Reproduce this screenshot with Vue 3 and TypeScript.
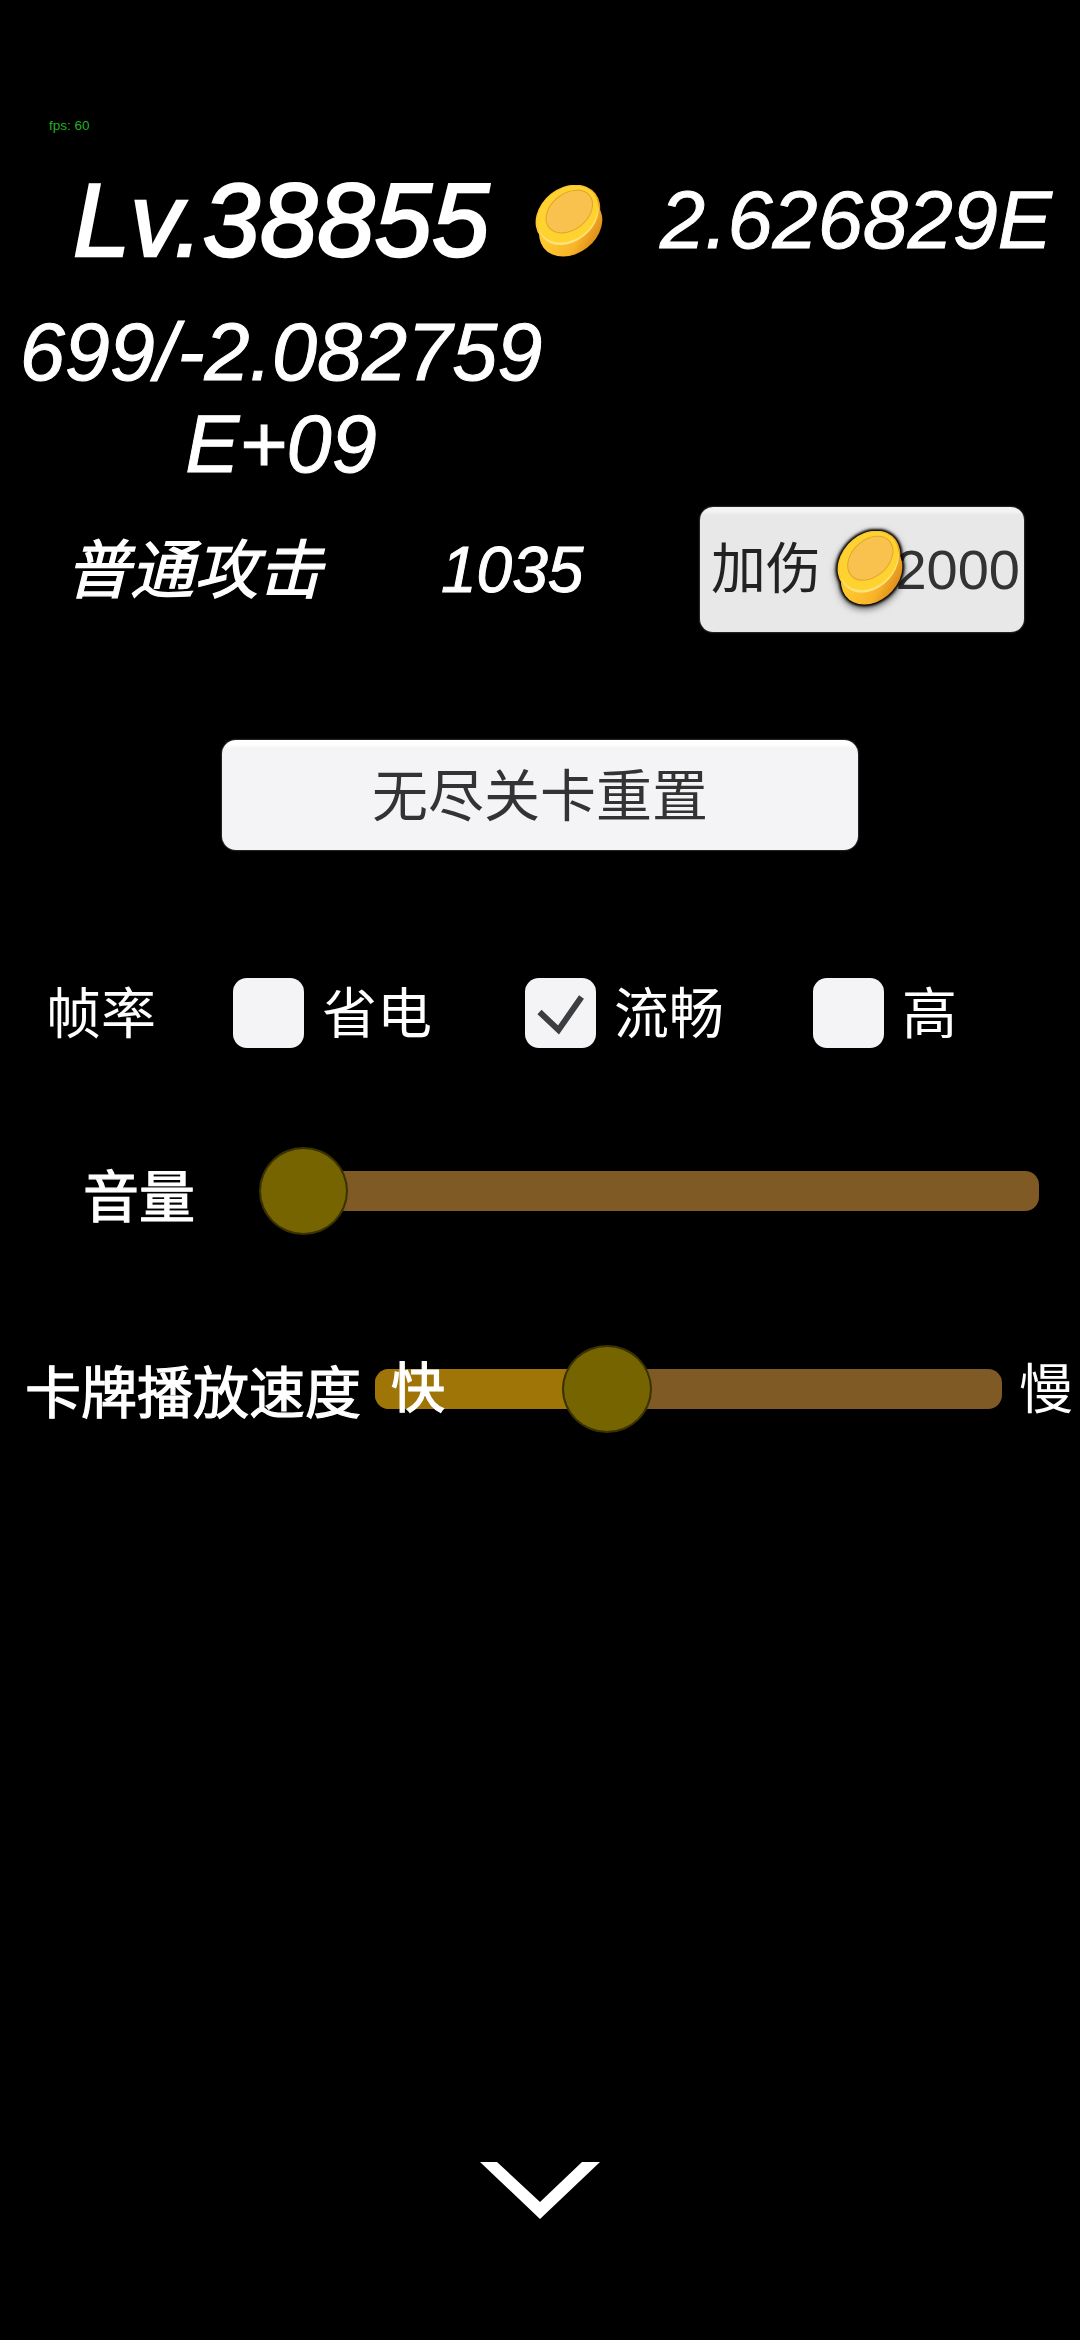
<script setup lang="ts">
interface FrameOption { label: string; checked: boolean; width: number }
const frameOptions: FrameOption[] = [
  { label: '省电', checked: false, width: 292 },
  { label: '流畅', checked: true, width: 288 },
  { label: '高', checked: false, width: 200 },
]
</script>

<template>
  <main class="page">
    <svg width="0" height="0" class="defs" aria-hidden="true">
      <defs>
        <linearGradient id="coinBody" x1="0.3" y1="0.3" x2="0.7" y2="1">
          <stop offset="0" stop-color="#ffc92e" />
          <stop offset="0.6" stop-color="#f8b52a" />
          <stop offset="1" stop-color="#dd8a18" />
        </linearGradient>
        <symbol id="coin" viewBox="0 0 100 106" preserveAspectRatio="none">
          <g fill="url(#coinBody)">
            <ellipse cx="47" cy="43" rx="50" ry="39" transform="rotate(-38 47 43)" />
            <ellipse cx="51" cy="60" rx="49" ry="38" transform="rotate(-38 51 60)" />
          </g>
          <ellipse cx="48" cy="46" rx="47" ry="35" transform="rotate(-38 48 46)" fill="#ffe27a" />
          <ellipse cx="47" cy="42" rx="47" ry="36" transform="rotate(-38 47 42)" fill="#ffd32f" />
          <ellipse cx="49" cy="38" rx="37" ry="26" transform="rotate(-38 49 38)" fill="#f9c24f" stroke="#e3a52e" stroke-width="1.5" />
        </symbol>
      </defs>
    </svg>

    <div class="fps">fps: 60</div>

    <header class="level-row">
      <span class="level">Lv.38855</span>
      <svg class="coin-top"><use href="#coin" /></svg>
      <span class="gold">2.626829E</span>
    </header>

    <div class="exp">699/-2.082759<br />E+09</div>

    <section class="attack-row">
      <span class="attack-name">普通攻击</span>
      <span class="attack-value">1035</span>
      <button class="upgrade">
        <span class="upgrade-label">加伤</span>
        <span class="upgrade-cost">2000</span>
        <svg class="coin-button"><use href="#coin" /></svg>
      </button>
    </section>

    <button class="reset">无尽关卡重置</button>

    <section class="frame-row">
      <span class="frame-title">帧率</span>
      <label v-for="option in frameOptions" :key="option.label" class="frame-option" :style="{ width: option.width + 'px' }">
        <span class="box">
          <svg v-if="option.checked" class="tick" viewBox="0 0 70 70">
            <path d="M14 34 L33 52 L56 19" fill="none" stroke="#3c3e42" stroke-width="6" />
          </svg>
        </span>
        <span class="frame-label">{{ option.label }}</span>
      </label>
    </section>

    <section class="volume-row">
      <span class="volume-label">音量</span>
      <div class="track volume-track">
        <span class="thumb volume-thumb"></span>
      </div>
    </section>

    <section class="speed-row">
      <span class="speed-label">卡牌播放速度</span>
      <div class="track speed-track">
        <div class="speed-fill"></div>
        <span class="fast">快</span>
        <span class="thumb speed-thumb"></span>
      </div>
      <span class="slow">慢</span>
    </section>

    <div class="chevron-row">
      <svg class="chevron" viewBox="0 0 120 57">
        <path d="M0 0 H17 L60 40 L102 0 H120 L60 57 Z" fill="#fff" />
      </svg>
    </div>
  </main>
</template>

<style scoped>
.page {
  width: 1080px;
  height: 2340px;
  overflow: hidden;
  background: #000;
  color: #fff;
  font-family: "Liberation Sans", "Noto Sans CJK SC", sans-serif;
}
.defs {
  position: absolute;
}
.fps {
  padding: 116px 0 0 49px;
  height: 20px;
  font-size: 13.5px;
  line-height: 20px;
  color: #22b022;
}
.level-row {
  display: flex;
  align-items: center;
  height: 100px;
  margin-top: 32px;
  padding-left: 73px;
  font-style: italic;
}
.level {
  width: 462px;
  padding-top: 5px;
  font-size: 103px;
  line-height: 100px;
  -webkit-text-stroke: 2.5px #fff;
  white-space: nowrap;
}
.coin-top {
  width: 70px;
  height: 74px;
  flex: none;
  margin-top: 8px;
}
.gold {
  margin-left: 55px;
  padding-top: 4px;
  font-size: 81px;
  line-height: 100px;
  -webkit-text-stroke: 1px #fff;
  white-space: nowrap;
}
.exp {
  width: 562px;
  margin-top: 38px;
  font-size: 81px;
  line-height: 92px;
  font-style: italic;
  -webkit-text-stroke: 1px #fff;
  text-align: center;
}
.attack-row {
  display: flex;
  align-items: center;
  height: 125px;
  margin-top: 17px;
  padding-left: 66px;
  font-style: italic;
  font-size: 64px;
}
.attack-name {
  width: 375px;
  padding-bottom: 9px;
  -webkit-text-stroke: 1.2px #fff;
}
.attack-value {
  width: 259px;
  font-size: 64px;
  -webkit-text-stroke: 1px #fff;
}
button {
  padding: 0;
  border: 0;
  font-family: inherit;
}
.upgrade {
  position: relative;
  display: block;
  width: 324px;
  height: 125px;
  border-radius: 13px;
  background: linear-gradient(#f3f3f3 0, #f3f3f3 5px, #e8e8e9 8px);
  box-shadow: 0 0 2px rgba(255, 255, 255, 0.5);
  color: #333;
  font-size: 55px;
  line-height: 125px;
  text-align: left;
}
.upgrade-label {
  position: absolute;
  left: 11px;
  top: 0;
  color: #222;
}
.upgrade-cost {
  position: absolute;
  right: 4px;
  top: 0;
  font-size: 56px;
}
.coin-button {
  position: absolute;
  left: 137px;
  top: 24px;
  width: 68px;
  height: 76px;
  filter: drop-shadow(0 0 1.5px #000) drop-shadow(0 0 1.5px #000) drop-shadow(0 0 1px #000) drop-shadow(0 3px 3px rgba(0, 0, 0, 0.5));
}
.reset {
  display: block;
  width: 636px;
  height: 110px;
  margin: 108px 0 0 222px;
  padding-bottom: 8px;
  border-radius: 14px;
  background: linear-gradient(#fff 0, #fff 5px, #f4f4f6 8px);
  box-shadow: 0 0 2px rgba(255, 255, 255, 0.5);
  color: #333;
  font-size: 56px;
}
.frame-row {
  display: flex;
  align-items: center;
  height: 70px;
  margin-top: 128px;
  padding-left: 46px;
  font-size: 55px;
}
.frame-title {
  width: 187px;
  padding-bottom: 8px;
}
.frame-option {
  display: flex;
  align-items: center;
  gap: 18px;
  flex: none;
}
.frame-label {
  padding-bottom: 8px;
}
.box {
  width: 71px;
  height: 70px;
  flex: none;
  border-radius: 14px;
  background: #f4f4f6;
}
.tick {
  display: block;
  width: 71px;
  height: 70px;
}
.track {
  position: relative;
  height: 40px;
  border-radius: 14px;
  background: #805a24;
}
.thumb {
  position: absolute;
  top: -24px;
  width: 89px;
  height: 88px;
  border-radius: 50%;
  background: #756400;
  border: 2px solid #3a3200;
  box-sizing: border-box;
}
.volume-row {
  display: flex;
  align-items: center;
  height: 87px;
  margin-top: 99px;
  padding-left: 83px;
}
.volume-label {
  width: 177px;
  font-size: 56px;
  -webkit-text-stroke: 1.2px #fff;
  position: relative;
  top: 2px;
}
.volume-track {
  width: 779px;
}
.volume-thumb {
  left: -1px;
}
.speed-row {
  display: flex;
  align-items: center;
  height: 87px;
  margin-top: 111px;
  padding-left: 25px;
}
.speed-label {
  width: 350px;
  font-size: 56px;
  -webkit-text-stroke: 1.2px #fff;
  white-space: nowrap;
  position: relative;
  top: 0;
}
.speed-track {
  width: 627px;
  flex: none;
}
.speed-fill {
  width: 230px;
  height: 40px;
  border-radius: 14px 0 0 14px;
  background: #a07508;
}
.fast {
  position: absolute;
  left: 16px;
  top: -7px;
  font-size: 54px;
  line-height: 54px;
  -webkit-text-stroke: 1.2px #fff;
}
.speed-thumb {
  left: 187px;
  width: 90px;
}
.slow {
  margin-left: 17px;
  padding-bottom: 6px;
  font-size: 54px;
}
.chevron-row {
  display: flex;
  justify-content: center;
  margin-top: 730px;
}
.chevron {
  width: 120px;
  height: 57px;
}
</style>
